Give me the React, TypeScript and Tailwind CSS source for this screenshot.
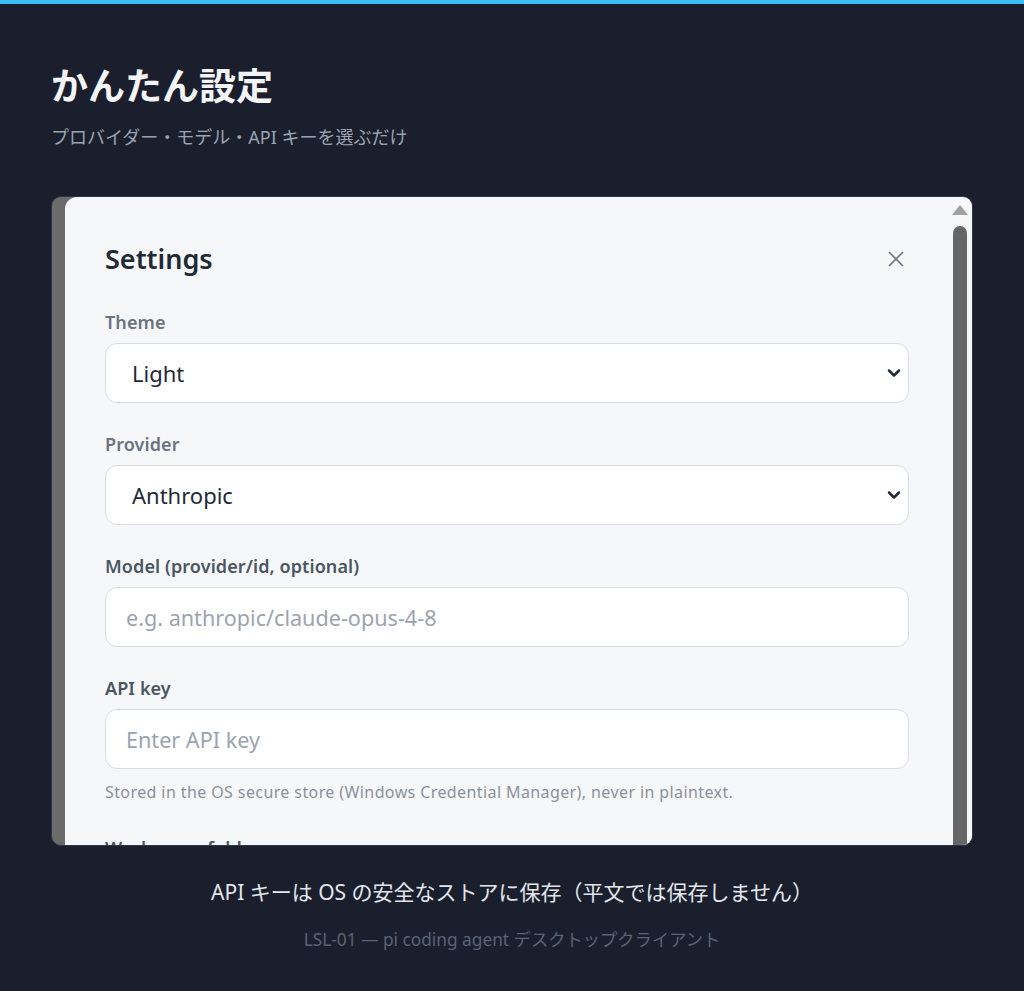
import { X } from "lucide-react";

const FONT = "font-['Noto_Sans','Noto_Sans_CJK_JP',sans-serif]";

function Chevron() {
  return (
    <svg
      aria-hidden
      viewBox="0 0 24 24"
      className="pointer-events-none absolute right-[5px] top-1/2 h-[20px] w-[20px] -translate-y-1/2 text-[#1f2937]"
      fill="none"
      stroke="currentColor"
      strokeWidth={3}
      strokeLinecap="round"
      strokeLinejoin="round"
    >
      <polyline points="6 9 12 15 18 9" />
    </svg>
  );
}

function Field({
  label,
  dark,
  children,
}: {
  label: string;
  dark?: boolean;
  children: React.ReactNode;
}) {
  return (
    <div className="mb-[29px]">
      <div
        className={`mb-[9px] text-[18px] font-semibold leading-6 tracking-[0.1px] ${dark ? "text-[#4b5563]" : "text-[#6b7280]"}`}
      >
        {label}
      </div>
      {children}
    </div>
  );
}

function Select({ value, options }: { value: string; options: string[] }) {
  return (
    <div className="relative">
      <select
        defaultValue={value}
        className="h-[60px] w-full appearance-none rounded-[12px] border border-[#d8dce2] bg-white pl-[26px] pr-10 text-[22px] text-[#1f2937] outline-none"
      >
        {options.map((o) => (
          <option key={o}>{o}</option>
        ))}
      </select>
      <Chevron />
    </div>
  );
}

function TextInput({ placeholder }: { placeholder: string }) {
  return (
    <input
      placeholder={placeholder}
      className="h-[60px] w-full rounded-[12px] border border-[#d8dce2] bg-white px-5 text-[21.6px] text-[#1f2937] outline-none placeholder:text-[#9ca3af]"
    />
  );
}

export default function App() {
  return (
    <main className={`min-h-screen border-t-4 border-[#38bdf8] bg-[#1b1f2d] ${FONT}`}>
      <div className="px-[51px] pt-[60px]">
        <h1 className="text-[37px] font-bold leading-[44px] text-[#f3f4f6]">かんたん設定</h1>
        <p className="mt-[15px] text-[18px] leading-7 text-[#9aa3b2]">
          プロバイダー・モデル・API キーを選ぶだけ
        </p>

        <div className="mt-[45px] h-[650px] overflow-hidden rounded-[10px] border border-[#2e3547] bg-[#6b6b6b] pl-[13px]">
          <div className="flex h-full overflow-hidden rounded-tl-[12px] bg-[#f6f7f9]">
            <div className="flex-1 pl-10 pr-[42px] pt-[44px]">
              <div className="mb-[33px] flex items-center justify-between">
                <h2 className="text-[27px] font-semibold leading-9 text-[#1f2937]">Settings</h2>
                <button className="text-[#6b7280]" aria-label="Close">
                  <X size={26} strokeWidth={1.5} />
                </button>
              </div>

              <Field label="Theme">
                <Select value="Light" options={["Light", "Dark", "System"]} />
              </Field>
              <Field label="Provider">
                <Select value="Anthropic" options={["Anthropic", "OpenAI", "Google"]} />
              </Field>
              <Field label="Model (provider/id, optional)" dark>
                <TextInput placeholder="e.g. anthropic/claude-opus-4-8" />
              </Field>
              <div className="mb-[33px]">
                <div className="mb-[9px] text-[18px] font-semibold leading-6 tracking-[0.1px] text-[#4b5563]">
                  API key
                </div>
                <TextInput placeholder="Enter API key" />
                <p className="mt-3 text-[16px] leading-[22px] tracking-[0.4px] text-[#8a919c]">
                  Stored in the OS secure store (Windows Credential Manager), never in plaintext.
                </p>
              </div>
              <Field label="Workspace folder" dark>
                <TextInput placeholder="" />
              </Field>
            </div>

            <div className="flex w-[21px] flex-col items-start pl-[1px] pt-[8px]">
              <div className="h-0 w-0 border-x-[8px] border-b-[10px] border-x-transparent border-b-[#a0a0a0]" />
              <div className="mt-[11px] ml-[1px] w-[14px] flex-1 rounded-t-full bg-[#666666]" />
            </div>
          </div>
        </div>

        <p className="mt-[32px] text-center text-[21px] leading-7 text-[#e2e6ec]">
          API キーは OS の安全なストアに保存（平文では保存しません）
        </p>
        <p className="mt-[22px] text-center text-[17.3px] leading-6 text-[#5a6275]">
          LSL-01 — pi coding agent デスクトップクライアント
        </p>
      </div>
    </main>
  );
}
